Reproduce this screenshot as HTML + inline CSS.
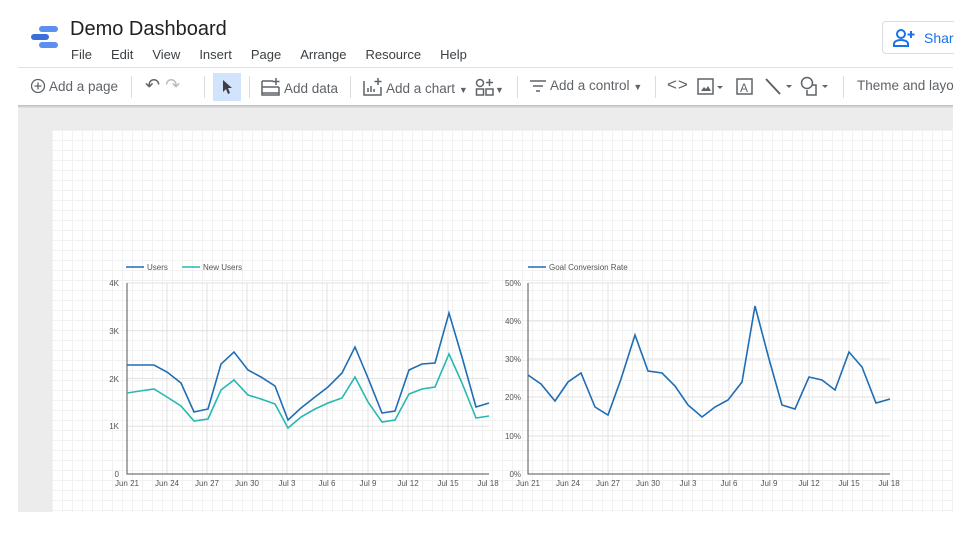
<!DOCTYPE html><html><head><style>
body{margin:0;width:978px;height:548px;background:#fff;font-family:"Liberation Sans",sans-serif;position:relative;overflow:hidden;color:#3c4043}
.a{position:absolute}
.menu span{margin-right:19px}
.tb{font-size:13.5px;color:#5f6368}
.sep{position:absolute;top:76px;width:1px;height:22px;background:#dadce0}
</style></head><body>
<svg class="a" style="left:30px;top:25px" width="30" height="26"><rect x="9" y="1" width="19" height="6" rx="3" fill="#5d8ff0"/><rect x="1" y="9" width="18" height="6" rx="3" fill="#3a6fd8"/><rect x="9" y="17" width="19" height="6" rx="3" fill="#5d8ff0"/></svg>
<div class="a" style="left:70px;top:18px;font-size:20px;color:#202124">Demo Dashboard</div>
<div class="a menu" style="left:71px;top:47px;font-size:13px;color:#3c4043"><span>File</span><span>Edit</span><span>View</span><span>Insert</span><span>Page</span><span>Arrange</span><span>Resource</span><span>Help</span></div>
<div class="a" style="left:882px;top:21px;width:100px;height:33px;border:1px solid #dadce0;border-radius:4px;color:#1a73e8;font-size:14px;line-height:33px;padding-left:41px;box-sizing:border-box">Share</div>
<svg class="a" style="left:892px;top:28px" width="24" height="20"><circle cx="9" cy="6" r="4" fill="none" stroke="#1a73e8" stroke-width="2"/><path d="M2 18v-2c0-3 4-4 7-4s7 1 7 4v2z" fill="none" stroke="#1a73e8" stroke-width="2"/><path d="M19 3v7M15.5 6.5h7" stroke="#1a73e8" stroke-width="2"/></svg>
<div class="a" style="left:18px;top:67px;width:935px;height:1px;background:#e0e0e0"></div>
<div class="a" style="left:18px;top:105px;width:935px;height:3px;background:linear-gradient(#bbb,#e8e8e8)"></div>
<div class="a" style="left:18px;top:108px;width:935px;height:404px;background:#ececec"></div>
<div class="a" style="left:52px;top:130px;width:901px;height:382px;background-color:#fff;background-image:linear-gradient(#f1f1f1 1px,transparent 1px),linear-gradient(90deg,#f1f1f1 1px,transparent 1px);background-size:10px 10px"></div>
<div class="a tb" style="left:30px;top:78px"><svg width="16" height="16" style="vertical-align:-3px"><circle cx="8" cy="8" r="6.5" fill="none" stroke="#5f6368" stroke-width="1.3"/><path d="M8 4.5v7M4.5 8h7" stroke="#5f6368" stroke-width="1.3"/></svg> Add a page</div>
<div class="sep" style="left:131px"></div>
<div class="a tb" style="left:145px;top:75px;font-size:18px">↶ <span style="color:#bbb">↷</span></div>
<div class="sep" style="left:204px"></div>
<div class="a" style="left:213px;top:73px;width:28px;height:28px;background:#d2e3fc"></div>
<svg class="a" style="left:221px;top:79px" width="12" height="16"><path d="M2 1v12l3-3 2 5 2-1-2-5h4z" fill="#3c4043"/></svg>
<div class="sep" style="left:249px"></div>
<div class="a tb" style="left:261px;top:78px"><svg width="20" height="18" style="vertical-align:-3px"><path d="M1 3h11M1 9h17M1 15h17M1 3v14h17V9" fill="none" stroke="#5f6368" stroke-width="1.5"/><path d="M15 0v7M11.5 3.5h7" stroke="#5f6368" stroke-width="1.5"/></svg> Add data</div>
<div class="sep" style="left:350px"></div>
<div class="a tb" style="left:363px;top:78px"><svg width="20" height="18" style="vertical-align:-3px"><path d="M1 3v14h17V9" fill="none" stroke="#5f6368" stroke-width="1.5"/><path d="M5 14v-4M8 14v-6M11 14v-3M15 0v7M11.5 3.5h7" stroke="#5f6368" stroke-width="1.5"/></svg> Add a chart <span style="font-size:9px">▼</span></div>
<div class="a tb" style="left:475px;top:78px"><svg width="20" height="18" style="vertical-align:-3px"><circle cx="5" cy="5" r="3.5" fill="none" stroke="#5f6368" stroke-width="1.5"/><rect x="1.5" y="11" width="7" height="6" fill="none" stroke="#5f6368" stroke-width="1.5"/><rect x="11" y="11" width="7" height="6" fill="none" stroke="#5f6368" stroke-width="1.5"/><path d="M14.5 1v7M11 4.5h7" stroke="#5f6368" stroke-width="1.5"/></svg><span style="font-size:9px">▼</span></div>
<div class="sep" style="left:517px"></div>
<div class="a tb" style="left:529px;top:78px"><svg width="18" height="14" style="vertical-align:-2px"><path d="M1 3h16M4 8h10M7 13h4" stroke="#5f6368" stroke-width="1.5"/></svg> Add a control <span style="font-size:9px">▼</span></div>
<div class="sep" style="left:655px"></div>
<div class="a tb" style="left:667px;top:75px;font-size:17px;letter-spacing:1px">&lt;&gt;</div>
<svg class="a" style="left:697px;top:78px" width="40" height="18"><rect x="1" y="1" width="15" height="15" fill="none" stroke="#5f6368" stroke-width="1.5"/><path d="M4 13l3-4 2 2 2-3 3 5z" fill="#5f6368"/><path d="M20 8h6l-3 3z" fill="#5f6368"/></svg>
<svg class="a" style="left:735px;top:77px" width="20" height="20"><rect x="2" y="2" width="15" height="15" fill="none" stroke="#5f6368" stroke-width="1.5"/><text x="5" y="15" font-size="12" fill="#5f6368" font-family="Liberation Sans">A</text></svg>
<svg class="a" style="left:764px;top:77px" width="32" height="20"><path d="M2 2l14 15" stroke="#5f6368" stroke-width="2"/><path d="M22 8h6l-3 3z" fill="#5f6368"/></svg>
<svg class="a" style="left:800px;top:76px" width="32" height="22"><circle cx="7" cy="7" r="5.5" fill="none" stroke="#5f6368" stroke-width="1.5"/><path d="M12 9h4v10H7v-5" fill="none" stroke="#5f6368" stroke-width="1.5"/><path d="M22 9h6l-3 3z" fill="#5f6368"/></svg>
<div class="sep" style="left:843px"></div>
<div class="a tb" style="left:857px;top:78px;white-space:nowrap">Theme and layout</div>
<div class="a" style="left:954px;top:0;width:25px;height:548px;background:#fff"></div>

<svg class="a" style="left:0;top:0" width="978" height="548" font-family="Liberation Sans" font-size="8" fill="#555">
<g stroke="#e2e2e2" stroke-width="1">
<path d="M127 283H489M127 330.75H489M127 378.5H489M127 426.25H489M167 283V474M207 283V474M247 283V474M287 283V474M327 283V474M368 283V474M408 283V474M448 283V474"/>
<path d="M528 283H890M528 321H890M528 359H890M528 397H890M528 436H890M568 283V474M608 283V474M648 283V474M688 283V474M729 283V474M769 283V474M809 283V474M849 283V474"/>
</g>
<path d="M127 283V474H489M528 283V474H890" stroke="#555" fill="none"/>
<g text-anchor="end"><text x="119" y="286">4K</text><text x="119" y="334">3K</text><text x="119" y="382">2K</text><text x="119" y="429">1K</text><text x="119" y="477">0</text>
<text x="521" y="286">50%</text><text x="521" y="324">40%</text><text x="521" y="362">30%</text><text x="521" y="400">20%</text><text x="521" y="439">10%</text><text x="521" y="477">0%</text></g>
<g text-anchor="middle"><text x="127" y="486">Jun 21</text><text x="167" y="486">Jun 24</text><text x="207" y="486">Jun 27</text><text x="247" y="486">Jun 30</text><text x="287" y="486">Jul 3</text><text x="327" y="486">Jul 6</text><text x="368" y="486">Jul 9</text><text x="408" y="486">Jul 12</text><text x="448" y="486">Jul 15</text><text x="488" y="486">Jul 18</text>
<text x="528" y="486">Jun 21</text><text x="568" y="486">Jun 24</text><text x="608" y="486">Jun 27</text><text x="648" y="486">Jun 30</text><text x="688" y="486">Jul 3</text><text x="729" y="486">Jul 6</text><text x="769" y="486">Jul 9</text><text x="809" y="486">Jul 12</text><text x="849" y="486">Jul 15</text><text x="889" y="486">Jul 18</text></g>
<path d="M126 267h18" stroke="#1f6db5" stroke-width="1.5"/><path d="M182 267h18" stroke="#26b8b0" stroke-width="1.5"/>
<text x="147" y="270">Users</text><text x="203" y="270">New Users</text>
<path d="M528 267h18" stroke="#1f6db5" stroke-width="1.5"/><text x="549" y="270">Goal Conversion Rate</text>
<polyline fill="none" stroke="#26b8b0" stroke-width="1.6" points="127,393 140,391 154,389 167,397 181,406 194,421 208,419 221,390 234,380 248,395 261,399 275,404 288,428 301,417 315,409 328,403 342,398 355,377 368,402 382,422 395,420 409,394 422,389 435,387 449,354 462,383 476,418 489,416"/>
<polyline fill="none" stroke="#1f6db5" stroke-width="1.6" points="127,365 140,365 154,365 167,372 181,383 194,412 208,409 221,364 234,352 248,370 261,377 275,386 288,420 301,408 315,397 328,387 342,373 355,347 368,378 382,413 395,411 409,370 422,364 435,363 449,313 462,357 476,407 489,403"/>
<polyline fill="none" stroke="#1f6db5" stroke-width="1.6" points="528,375 541,384 555,401 568,382 581,373 595,407 608,415 621,379 635,335 648,371 662,373 675,386 688,405 702,417 715,407 728,400 742,382 755,306 769,359 782,405 795,409 809,377 822,380 835,390 849,352 862,367 876,403 890,399"/>
</svg>
</body></html>
